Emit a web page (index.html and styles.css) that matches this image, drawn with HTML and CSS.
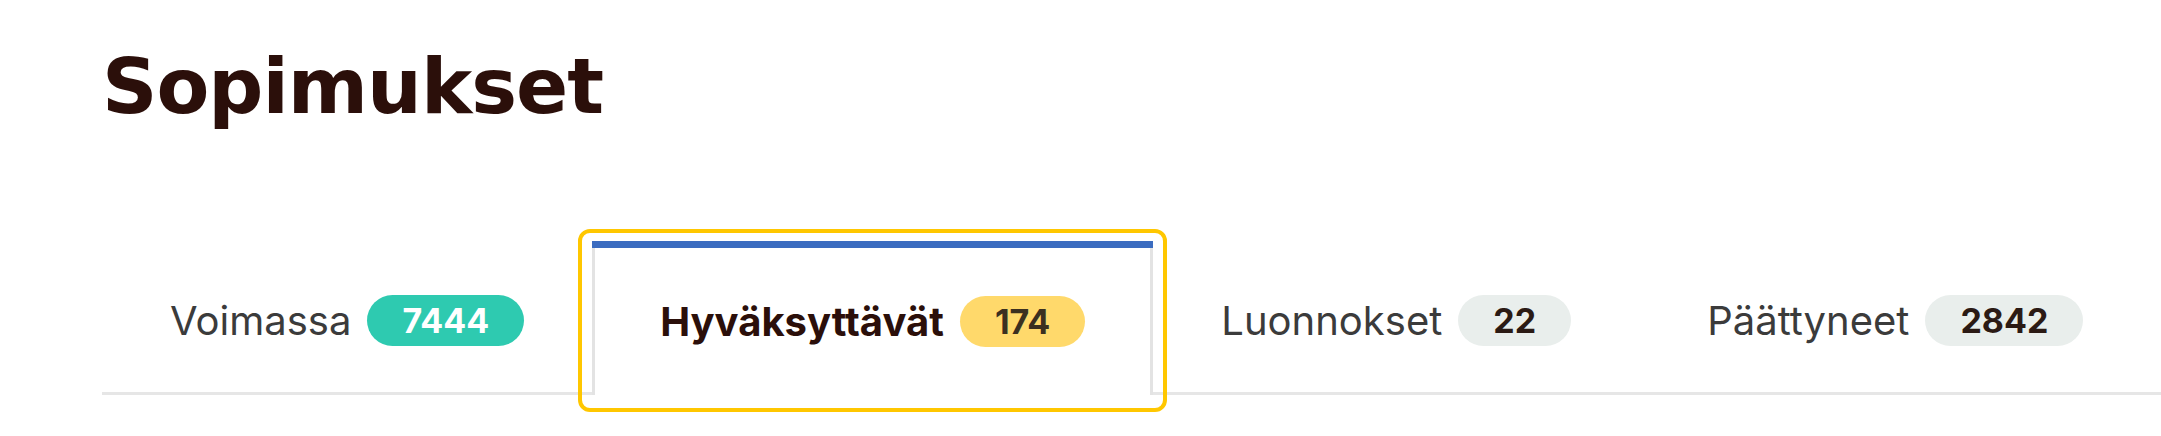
FILE: index.html
```html
<!DOCTYPE html>
<html lang="fi">
<head>
<meta charset="utf-8">
<title>Sopimukset</title>
<link rel="stylesheet" href="styles.css">
</head>
<body>
<main class="page">
  <h1 class="title">Sopimukset</h1>
  <nav class="tabs">
    <a class="tab" href="#">
      <span class="tab-label">Voimassa</span>
      <span class="badge badge-teal">7444</span>
    </a>
    <a class="tab tab-active" href="#">
      <span class="tab-label">Hyväksyttävät</span>
      <span class="badge badge-yellow">174</span>
    </a>
    <a class="tab" href="#">
      <span class="tab-label">Luonnokset</span>
      <span class="badge badge-gray">22</span>
    </a>
    <a class="tab" href="#">
      <span class="tab-label">Päättyneet</span>
      <span class="badge badge-gray">2842</span>
    </a>
  </nav>
</main>
</body>
</html>
```

FILE: styles.css
```css
* { box-sizing: border-box; }

html, body {
  margin: 0;
  padding: 0;
  background: #ffffff;
}

.page {
  padding: 39px 0 40px 102px;
}

.title {
  margin: 0;
  font-family: "DejaVu Sans", "Lato", sans-serif;
  font-weight: 700;
  font-size: 77px;
  line-height: 96px;
  color: #2b0f0a;
  letter-spacing: -1px;
}

.tabs {
  display: flex;
  margin-top: 106px;
  border-bottom: 3px solid #e6e6e6;
  font-family: "Inter", "Roboto", sans-serif;
}

.tab {
  position: relative;
  display: flex;
  align-items: center;
  gap: 16px;
  height: 151px;
  padding: 7px 65px 0;
  border-left: 3px solid transparent;
  border-right: 3px solid transparent;
  text-decoration: none;
  color: #3b3b3b;
  font-size: 40px;
}

.tab-active {
  margin-bottom: -3px;
  height: 154px;
  background: #ffffff;
  border-left-color: #e3e3e3;
  border-right-color: #e3e3e3;
  color: #2b0f0a;
  font-weight: 700;
}

.tab-active::before {
  content: "";
  position: absolute;
  top: 0;
  left: -3px;
  right: -3px;
  height: 7px;
  background: #3b6cc0;
}

.tab-active::after {
  content: "";
  position: absolute;
  top: -12px;
  bottom: -17px;
  left: -17px;
  right: -17px;
  border: 4px solid #ffc700;
  border-radius: 12px;
  pointer-events: none;
}

.tab-label {
  white-space: nowrap;
}

.badge {
  display: inline-block;
  height: 51px;
  line-height: 51px;
  padding: 0 35px;
  border-radius: 26px;
  font-size: 34px;
  font-weight: 700;
  white-space: nowrap;
}

.badge-teal {
  background: #2ecab0;
  color: #ffffff;
}

.badge-yellow {
  background: #ffd96b;
  color: #3b3020;
}

.badge-gray {
  background: #e9eeec;
  color: #2b1a14;
}
```
